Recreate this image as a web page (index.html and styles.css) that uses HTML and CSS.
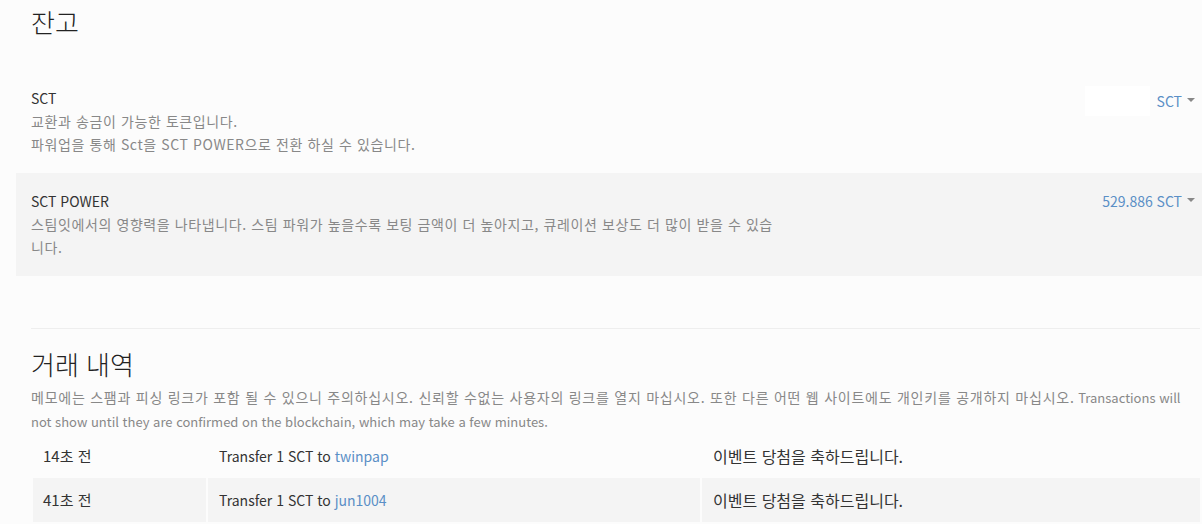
FILE: index.html
```html
<!DOCTYPE html>
<html lang="ko">
<head>
  <meta charset="UTF-8">
  <meta name="viewport" content="width=device-width, initial-scale=1.0">
  <title>지갑</title>
  <link rel="stylesheet" href="styles.css">
</head>
<body>
  <main class="wallet">
    <section class="balances">
      <h2 class="section-title">잔고</h2>

      <div class="balance-row">
        <div class="balance-info">
          <div class="balance-name">SCT</div>
          <p class="balance-desc">교환과 송금이 가능한 토큰입니다.<br>파워업을 통해 Sct을 SCT POWER으로 전환 하실 수 있습니다.</p>
        </div>
        <div class="balance-value">
          <span class="value-box"></span>
          <a href="#" class="value-link">SCT</a>
          <span class="caret"></span>
        </div>
      </div>

      <div class="balance-row striped">
        <div class="balance-info">
          <div class="balance-name">SCT POWER</div>
          <p class="balance-desc">스팀잇에서의 영향력을 나타냅니다. 스팀 파워가 높을수록 보팅 금액이 더 높아지고, 큐레이션 보상도 더 많이 받을 수 있습니다.</p>
        </div>
        <div class="balance-value">
          <a href="#" class="value-link">529.886 SCT</a>
          <span class="caret"></span>
        </div>
      </div>
    </section>

    <hr class="divider">

    <section class="history">
      <h2 class="section-title history-title">거래 내역</h2>
      <p class="history-note"><span class="note-ko">메모에는 스팸과 피싱 링크가 포함 될 수 있으니 주의하십시오. 신뢰할 수없는 사용자의 링크를 열지 마십시오. 또한 다른 어떤 웹 사이트에도 개인키를 공개하지 마십시오.</span> Transactions will not show until they are confirmed on the blockchain, which may take a few minutes.</p>

      <div class="tx-table">
        <div class="tx-row">
          <div class="tx-cell tx-time">14초 전</div>
          <div class="tx-cell tx-op">Transfer 1 SCT to <a href="#">twinpap</a></div>
          <div class="tx-cell tx-memo">이벤트 당첨을 축하드립니다.</div>
        </div>
        <div class="tx-row">
          <div class="tx-cell tx-time">41초 전</div>
          <div class="tx-cell tx-op">Transfer 1 SCT to <a href="#">jun1004</a></div>
          <div class="tx-cell tx-memo">이벤트 당첨을 축하드립니다.</div>
        </div>
      </div>
    </section>
  </main>
</body>
</html>
```

FILE: styles.css
```css
* {
  margin: 0;
  padding: 0;
  box-sizing: border-box;
}

body {
  font-family: "Noto Sans CJK KR", "Noto Sans", sans-serif;
  background: #fcfcfc;
  color: #333333;
  overflow: hidden;
}

a {
  color: #5a8fc6;
  text-decoration: none;
}

.wallet {
  padding: 0 2px 0 31px;
}

.section-title {
  font-size: 26px;
  font-weight: 300;
  line-height: 36px;
  color: #222222;
  margin: 4px 0 30px;
}

/* 잔고 */
.balance-row {
  display: flex;
  justify-content: space-between;
  align-items: flex-start;
  margin-left: -15px;
  margin-right: -2px;
  padding: 16px 7px 17px 15px;
}

.balance-row.striped {
  background: #f4f4f4;
}

.balance-name {
  font-size: 14px;
  line-height: 24px;
}

.balance-desc {
  font-size: 14px;
  line-height: 23px;
  letter-spacing: 0.6px;
  color: #888888;
  max-width: 750px;
  word-break: break-all;
}

.balance-value {
  display: flex;
  align-items: center;
  font-size: 14px;
  line-height: 24px;
}

.value-box {
  width: 65px;
  height: 30px;
  background: #ffffff;
  margin-right: 7px;
}

.caret {
  width: 0;
  height: 0;
  border-top: 4px solid #888888;
  border-left: 4px solid transparent;
  border-right: 4px solid transparent;
  margin: 0 0 3px 5px;
}

.divider {
  border: none;
  border-top: 1px solid #eeeeee;
  margin-top: 52px;
}

/* 거래 내역 */
.history-title {
  margin: 17px 0 3px;
}

.history-note {
  font-size: 13px;
  line-height: 24px;
  color: #888888;
  padding-right: 12px;
}

.note-ko {
  font-size: 14px;
  letter-spacing: 0.75px;
}

.tx-table {
  margin: 0 0 0 2px;
}

.tx-row {
  display: grid;
  grid-template-columns: 173px 492px 1fr;
  column-gap: 2px;
}

.tx-row:nth-child(even) .tx-cell {
  background: #f4f4f4;
}

.tx-cell {
  line-height: 24px;
  padding: 10px 10px;
  color: #333333;
}

.tx-time {
  font-size: 15px;
}

.tx-op {
  font-size: 14px;
  padding-left: 11px;
}

.tx-memo {
  font-size: 16px;
  padding-left: 11px;
}
```
